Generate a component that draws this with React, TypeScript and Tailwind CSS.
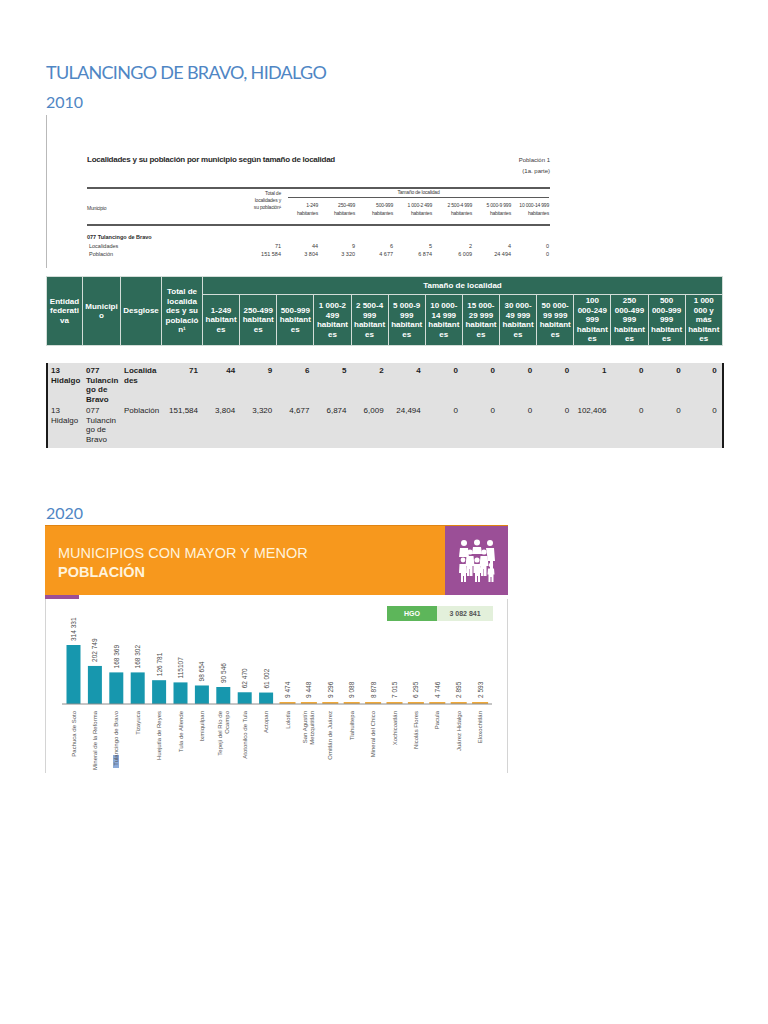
const heading = { fontFamily: "Lato, 'Open Sans', sans-serif" };
const arial = { fontFamily: "'Liberation Sans', Arial, sans-serif" };
const narrow = { fontFamily: "'Liberation Sans Narrow', 'Liberation Sans', sans-serif" };

const sizeHeaders = [
  '1-249\nhabitant\nes',
  '250-499\nhabitant\nes',
  '500-999\nhabitant\nes',
  '1 000-2\n499\nhabitant\nes',
  '2 500-4\n999\nhabitant\nes',
  '5 000-9\n999\nhabitant\nes',
  '10 000-\n14 999\nhabitant\nes',
  '15 000-\n29 999\nhabitant\nes',
  '30 000-\n49 999\nhabitant\nes',
  '50 000-\n99 999\nhabitant\nes',
  '100\n000-249\n999\nhabitant\nes',
  '250\n000-499\n999\nhabitant\nes',
  '500\n000-999\n999\nhabitant\nes',
  '1 000\n000 y\nmás\nhabitant\nes',
];

const rows = [
  {
    bold: true,
    cells: ['13\nHidalgo', '077\nTulancin\ngo de\nBravo', 'Localida\ndes'],
    values: ['71', '44', '9', '6', '5', '2', '4', '0', '0', '0', '0', '1', '0', '0', '0'],
  },
  {
    bold: false,
    cells: ['13\nHidalgo', '077\nTulancin\ngo de\nBravo', 'Población'],
    values: ['151,584', '3,804', '3,320', '4,677', '6,874', '6,009', '24,494', '0', '0', '0', '0', '102,406', '0', '0', '0'],
  },
];

const scanCols = ['1-249', '250-499', '500-999', '1 000-2 499', '2 500-4 999', '5 000-9 999', '10 000-14 999'];
const scanLoc = ['71', '44', '9', '6', '5', '2', '4', '0'];
const scanPob = ['151 584', '3 804', '3 320', '4 677', '6 874', '6 009', '24 494', '0'];
const scanGrid = 'grid grid-cols-[154px_40px_37px_37px_38px_39px_40px_39px_38px]';

const bars: { name: string[]; v: number; label: string }[] = [
  { name: ['Pachuca de Soto'], v: 314331, label: '314 331' },
  { name: ['Mineral de la Reforma'], v: 202749, label: '202 749' },
  { name: ['Tulancingo de Bravo'], v: 168369, label: '168 369' },
  { name: ['Tizayuca'], v: 168302, label: '168 302' },
  { name: ['Huejutla de Reyes'], v: 126781, label: '126 781' },
  { name: ['Tula de Allende'], v: 115107, label: '115107' },
  { name: ['Ixmiquilpan'], v: 98654, label: '98 654' },
  { name: ['Tepeji del Río de', 'Ocampo'], v: 90546, label: '90 546' },
  { name: ['Atotonilco de Tula'], v: 62470, label: '62 470' },
  { name: ['Actopan'], v: 61002, label: '61 002' },
  { name: ['Lolotla'], v: 9474, label: '9 474' },
  { name: ['San Agustín', 'Metzquititlán'], v: 9448, label: '9 448' },
  { name: ['Omitlán de Juárez'], v: 9296, label: '9 296' },
  { name: ['Tlahuiltepa'], v: 9088, label: '9 088' },
  { name: ['Mineral del Chico'], v: 8878, label: '8 878' },
  { name: ['Xochicoatlán'], v: 7015, label: '7 015' },
  { name: ['Nicolás Flores'], v: 6295, label: '6 295' },
  { name: ['Pacula'], v: 4746, label: '4 746' },
  { name: ['Juárez Hidalgo'], v: 2895, label: '2 895' },
  { name: ['Eloxochitlán'], v: 2593, label: '2 593' },
];

function Cols() {
  return (
    <colgroup>
      <col className="w-[36px]" />
      <col className="w-[38px]" />
      <col className="w-[41px]" />
      <col className="w-[41px]" />
      {sizeHeaders.map((_, i) => (
        <col key={i} className="w-[37.14px]" />
      ))}
    </colgroup>
  );
}

function ScannedTable() {
  return (
    <div className="mt-[2px] h-[153px] border-l border-[#b9b9b9] pl-[40px] pt-[40px] text-[#3a3a3a]" style={narrow}>
      <div className="w-[463px]">
        <div className="flex items-start justify-between">
          <div className="text-[8px] font-bold leading-[10px] tracking-[-0.25px] text-[#2a2a2a]">
            Localidades y su población por municipio según tamaño de localidad
          </div>
          <div className="text-right text-[6px] leading-[11px]">
            <div>Población 1</div>
            <div>(1a. parte)</div>
          </div>
        </div>
        <div className={`${scanGrid} mt-[10px] border-y-2 border-[#5a5a5a] text-[5px] leading-[7px] tracking-[-0.2px]`}>
          <div className="row-span-2 self-center pt-[4px]">Municipio</div>
          <div className="row-span-2 pt-[1px] text-right">
            Total de
            <br />
            localidades y
            <br />
            su población¹
          </div>
          <div className="col-span-7 ml-[7px] border-b border-[#5a5a5a] pb-[1px] text-center">Tamaño de localidad</div>
          {scanCols.map((c) => (
            <div key={c} className="pt-[3px] pb-[7px] text-right leading-[8px]">
              {c}
              <br />
              habitantes
            </div>
          ))}
        </div>
        <div className="mt-[7px] text-[5.5px] leading-[8.5px]">
          <div className="font-bold text-[#2a2a2a]">077 Tulancingo de Bravo</div>
          <div className={scanGrid}>
            <div className="pl-[2px]">Localidades</div>
            {scanLoc.map((v, i) => (
              <div key={i} className="text-right">
                {v}
              </div>
            ))}
          </div>
          <div className={scanGrid}>
            <div className="pl-[2px]">Población</div>
            {scanPob.map((v, i) => (
              <div key={i} className="text-right">
                {v}
              </div>
            ))}
          </div>
        </div>
      </div>
    </div>
  );
}

function GreenTable() {
  const th = 'border border-[#d3ddd8] bg-[#2e6a58] px-[1px] text-center align-middle font-bold whitespace-pre-line text-white';
  return (
    <div className="mt-[8px] text-[8px] leading-[9.5px]" style={arial}>
      <table className="w-[676px] table-fixed border-collapse">
        <Cols />
        <thead>
          <tr className="h-[18px]">
            <th rowSpan={2} className={th}>{'Entidad\nfederati\nva'}</th>
            <th rowSpan={2} className={th}>{'Municipi\no'}</th>
            <th rowSpan={2} className={th}>Desglose</th>
            <th rowSpan={2} className={th}>{'Total de\nlocalida\ndes y su\npoblació\nn¹'}</th>
            <th colSpan={14} className={th}>Tamaño de localidad</th>
          </tr>
          <tr className="h-[51px]">
            {sizeHeaders.map((h) => (
              <th key={h} className={th}>
                {h}
              </th>
            ))}
          </tr>
        </thead>
      </table>
      <table className="mt-[17px] w-[676px] table-fixed border-collapse border-x-2 border-[#1a1a1a] bg-[#e1e1e1] text-[#1e1e1e]">
        <Cols />
        <tbody>
          {rows.map((r, ri) => (
            <tr key={ri} className={r.bold ? 'h-[38px] font-bold' : 'h-[44px]'}>
              {r.cells.map((c, ci) => (
                <td key={ci} className={`${ri === 0 ? 'pt-[3px]' : 'pt-[2px]'} pl-[3px] align-top whitespace-pre-line`}>
                  {c}
                </td>
              ))}
              {r.values.map((v, vi) => (
                <td key={vi} className={`${ri === 0 ? 'pt-[3px]' : 'pt-[2px]'} pr-[5px] text-right align-top`}>
                  {v}
                </td>
              ))}
            </tr>
          ))}
        </tbody>
      </table>
    </div>
  );
}

function PeopleIcon() {
  return (
    <svg width="40" height="44" viewBox="0 0 40 44" fill="#ffffff">
      <circle cx="7" cy="4" r="3" />
      <circle cx="20" cy="3.5" r="3" />
      <circle cx="33" cy="4" r="3" />
      <path d="M3 9h8l1 9H2z" />
      <path d="M16 8h8l1 7H15z" />
      <path d="M29 9h8l1 13h-2v12h-3v-12h-2z" />
      <circle cx="13" cy="13" r="2.6" />
      <circle cx="27" cy="13" r="2.6" />
      <path d="M9.5 17h7l1 10h-2v10h-2.5v-7h-0.5v7H10v-10H8.5z" />
      <path d="M23.5 17h7l1 10h-2v10H27v-7h-0.5v7H24v-10h-1.5z" />
      <circle cx="6" cy="21" r="2.4" />
      <circle cx="20" cy="21" r="2.6" />
      <path d="M2.5 25h7l0.5 9H9v9H7v-6H6v6H4v-9H2z" />
      <path d="M16.5 25h7l1 9h-1.5v9H21v-6h-1v6h-2v-9h-1.5z" />
      <circle cx="34" cy="26" r="2.2" />
      <path d="M31 29.5h6l0.5 6h-1v7.5h-2v-5h-1v5h-2v-7.5h-1z" />
    </svg>
  );
}

function PopulationChart() {
  const base = 105;
  const scale = 59 / 314331;
  return (
    <div className="w-[463px]">
      <div className="flex h-[70px] border-t border-[#e08412]">
        <div className="flex-1 bg-[#f7981d] pl-[13px] pt-[18px] text-[#fff3dc]" style={arial}>
          <div className="text-[14.5px] leading-[19px]">MUNICIPIOS CON MAYOR Y MENOR</div>
          <div className="text-[14.5px] font-bold leading-[19px]">POBLACIÓN</div>
        </div>
        <div className="flex w-[63px] items-center justify-center bg-[#9b4f97]">
          <PeopleIcon />
        </div>
      </div>
      <div className="h-[4px] w-[34px] bg-[#9b4f97]" />
      <div className="relative h-[174px] border-x border-[#d4d4d4]">
        <div className="absolute right-[14px] top-[7px] flex h-[15px] text-[7px] font-bold leading-[15px]" style={arial}>
          <div className="w-[50px] bg-[#5db65a] text-center text-white">HGO</div>
          <div className="w-[56px] bg-[#e3f0db] text-center text-[#555555]">3 082 841</div>
        </div>
        <svg width="461" height="174" viewBox="0 0 461 174" className="block" style={arial}>
          <rect x="67" y="156" width="6" height="13" fill="#5a86c8" opacity="0.7" />
          {bars.map((b, i) => {
            const cx = 27.5 + i * 21.4;
            const h = Math.max(b.v * scale, 2);
            const top = base - h;
            const big = i < 10;
            return (
              <g key={i}>
                <rect x={big ? cx - 7 : cx - 8} y={top} width={big ? 14 : 16} height={h} fill={big ? '#1797ae' : '#efa93a'} />
                <text transform={`translate(${cx + 2.5} ${top - 4}) rotate(-90)`} fontSize="6.5" fill="#4a4a4a">
                  {b.label}
                </text>
                {b.name.map((line, li) => (
                  <text
                    key={li}
                    transform={`translate(${cx + 2 + (b.name.length > 1 ? (li === 0 ? -3.5 : 3.5) : 0)} 112) rotate(-90)`}
                    fontSize="6"
                    fill="#555555"
                    textAnchor="end"
                  >
                    {line}
                  </text>
                ))}
              </g>
            );
          })}
          <line x1="16" y1={base} x2="446" y2={base} stroke="#8c8c8c" strokeWidth="1" />
        </svg>
      </div>
    </div>
  );
}

export default function App() {
  return (
    <div className="min-h-[1024px] bg-white pl-[46px] pt-[59px]">
      <h1 className="text-[18px] leading-[27px] tracking-[-0.7px] text-[#4f86c4]" style={heading}>
        TULANCINGO DE BRAVO, HIDALGO
      </h1>
      <h2 className="mt-[5px] text-[16px] leading-[22px] text-[#4f86c4]" style={heading}>
        2010
      </h2>
      <ScannedTable />
      <GreenTable />
      <h2 className="mt-[54px] text-[16px] leading-[22px] text-[#4f86c4]" style={heading}>
        2020
      </h2>
      <div className="-ml-[1px] mt-[1px]">
        <PopulationChart />
      </div>
    </div>
  );
}
